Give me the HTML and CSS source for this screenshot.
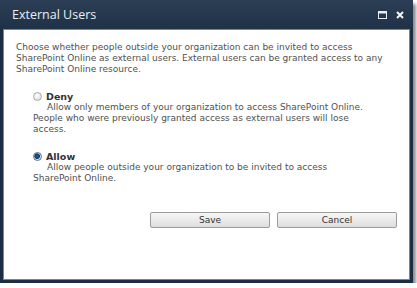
FILE: index.html
```html
<!DOCTYPE html>
<html lang="en">
<head>
    <meta charset="UTF-8">
    <title>External Users</title>
    <link rel="stylesheet" href="styles.css">
</head>
<body>
    <div class="dialog">
        <div class="titlebar">
            <span class="title">External Users</span>
            <div class="title-buttons">
                <svg class="icon" width="9" height="8" viewBox="0 0 9 8">
                    <rect x="0.5" y="0.5" width="8" height="7" fill="none" stroke="#e6edf5" stroke-width="1"/>
                    <rect x="0.5" y="0.5" width="8" height="2" fill="#e6edf5"/>
                </svg>
                <svg class="icon" width="8" height="8" viewBox="0 0 8 8">
                    <path d="M1 1 L7 7 M7 1 L1 7" stroke="#f2f5f9" stroke-width="2"/>
                </svg>
            </div>
        </div>
        <div class="content">
            <p class="intro">Choose whether people outside your organization can be invited to access SharePoint Online as external users. External users can be granted access to any SharePoint Online resource.</p>

            <div class="option">
                <label class="option-label">
                    <span class="radio"></span>
                    <span>Deny</span>
                </label>
                <p class="option-desc">Allow only members of your organization to access SharePoint Online. People who were previously granted access as external users will lose access.</p>
            </div>

            <div class="option">
                <label class="option-label">
                    <span class="radio checked"></span>
                    <span>Allow</span>
                </label>
                <p class="option-desc">Allow people outside your organization to be invited to access SharePoint Online.</p>
            </div>

            <div class="actions">
                <button class="btn">Save</button>
                <button class="btn">Cancel</button>
            </div>
        </div>
    </div>
</body>
</html>
```

FILE: styles.css
```css
* {
    box-sizing: border-box;
    margin: 0;
    padding: 0;
}

body {
    background-color: #ffffff;
    font-family: 'DejaVu Sans', Verdana, sans-serif;
}

.dialog {
    width: 413px;
    height: 283px;
    background-color: #1d2e44;
    padding: 0 3px 3px 3px;
    display: flex;
    flex-direction: column;
    box-shadow: 3px 4px 3px rgba(0, 0, 0, 0.45);
}

.titlebar {
    height: 29px;
    display: flex;
    align-items: center;
    justify-content: space-between;
    background: linear-gradient(#2c3f56, #1f3147);
    margin: 0 -3px;
    padding-left: 12px;
    padding-right: 9px;
}

.title {
    font-family: 'Open Sans', sans-serif;
    font-size: 12.5px;
    color: #e9eff6;
}

.title-buttons {
    display: flex;
    align-items: center;
    gap: 9px;
}

.icon {
    display: block;
}

.content {
    flex: 1;
    background-color: #ffffff;
    border: 1px solid #4d8fcf;
    padding: 12px 12px 0 12px;
    color: #505050;
    font-size: 9px;
    line-height: 11px;
}

.intro {
    margin-bottom: 15px;
    padding-right: 2px;
}

.option {
    padding-left: 17px;
    padding-right: 32px;
    margin-bottom: 15px;
}

.option-label {
    display: flex;
    align-items: center;
    gap: 4px;
    font-weight: bold;
    font-size: 9.5px;
    color: #333333;
    height: 12px;
}

.radio {
    width: 9px;
    height: 9px;
    border-radius: 50%;
    border: 1px solid #a9a9a9;
    background: radial-gradient(circle at 40% 35%, #ffffff, #d6d6d6);
}

.radio.checked {
    border-color: #5f6f80;
    background: radial-gradient(circle at 45% 45%, #1f5f9a 0, #0d3d6b 2.5px, #c9d6e2 3px, #eef2f6 4px);
}

.option-desc {
    text-indent: 14px;
}

.actions {
    display: flex;
    justify-content: flex-end;
    gap: 7px;
    margin-top: 28px;
}

.btn {
    width: 120px;
    height: 16px;
    font-family: 'DejaVu Sans', Verdana, sans-serif;
    font-size: 9px;
    color: #333333;
    border: 1px solid #9b9b9b;
    border-radius: 2px;
    background: linear-gradient(#f7f7f7, #dedede);
}
```
